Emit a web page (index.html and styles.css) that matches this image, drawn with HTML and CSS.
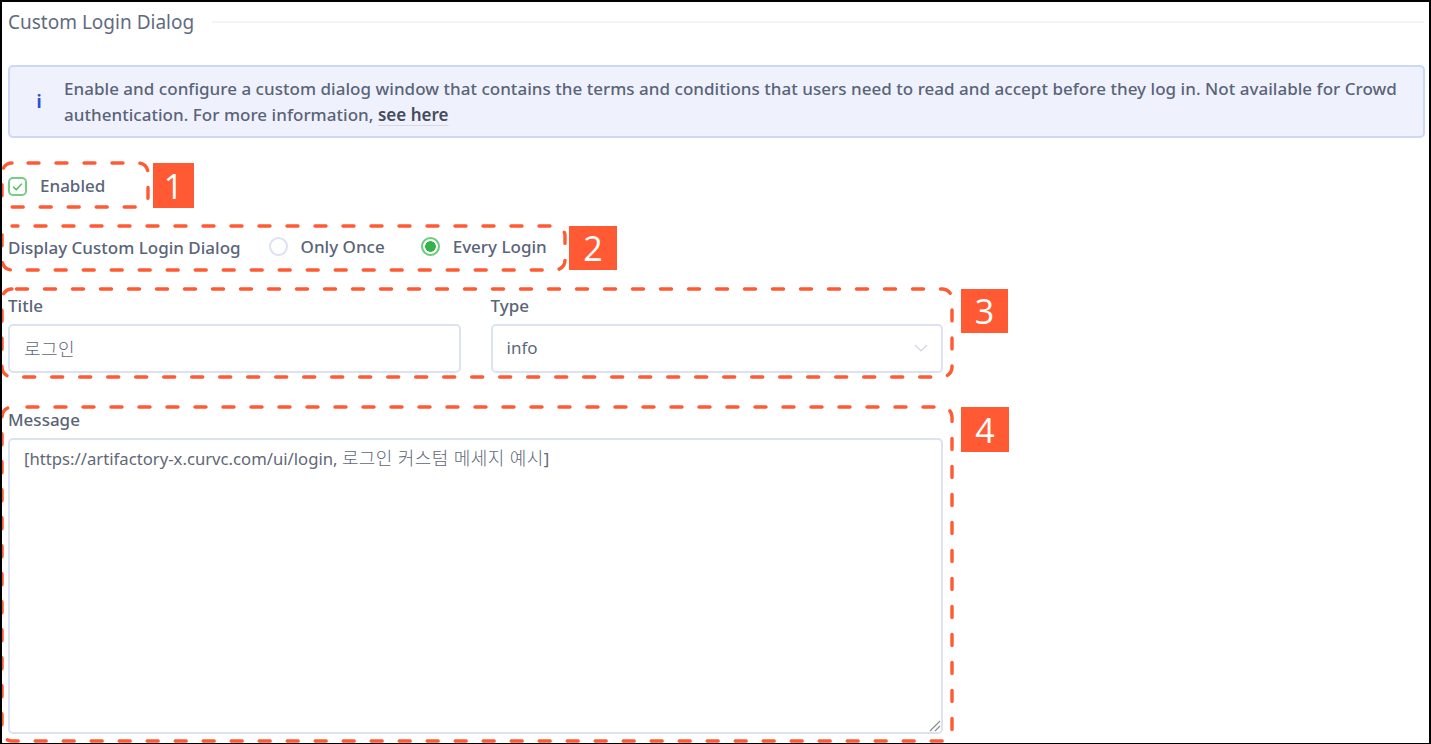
FILE: index.html
```html
<!DOCTYPE html>
<html lang="en">
<head>
<meta charset="utf-8">
<title>Custom Login Dialog</title>
<link rel="stylesheet" href="styles.css">
</head>
<body>
<main class="frame">
  <div class="section-head">
    <h2 class="section-title">Custom Login Dialog</h2>
    <div class="section-rule"></div>
  </div>
  <div class="alert">
    <span class="alert-icon">i</span>
    <p class="alert-text">Enable and configure a custom dialog window that contains the terms and conditions that users need to read and accept before they log in. Not available for Crowd authentication. For more information, <a class="alert-link">see here</a></p>
  </div>
  <div class="check-row">
    <span class="checkbox">
      <svg viewBox="0 0 12 12" width="13" height="13"><path d="M2 6.2 4.9 9 10 3.3" fill="none" stroke="#3fb950" stroke-width="1.2"/></svg>
    </span>
    <span class="option-label">Enabled</span>
  </div>
  <div class="radio-row">
    <span class="field-label radio-title">Display Custom Login Dialog</span>
    <span class="radio"></span>
    <span class="option-label once">Only Once</span>
    <span class="radio radio-on"></span>
    <span class="option-label">Every Login</span>
  </div>
  <div class="field-row">
    <div class="field">
      <label class="field-label">Title</label>
      <div class="input"><span class="ko">로그인</span></div>
    </div>
    <div class="field">
      <label class="field-label">Type</label>
      <div class="input select">
        <span>info</span>
        <svg viewBox="0 0 14 8" width="14" height="8"><path d="M1 1 7 7 13 1" fill="none" stroke="#d0d5e4" stroke-width="1.2"/></svg>
      </div>
    </div>
  </div>
  <div class="field message">
    <label class="field-label">Message</label>
    <div class="input textarea">
      <span>[https://artifactory-x.curvc.com/ui/login, <span class="ko">로그인 커스텀 메세지 예시</span>]</span>
      <svg class="grip" viewBox="0 0 12 12" width="12" height="12"><path d="M1 11 11 1M6 11 11 6" fill="none" stroke="#8a8a8a" stroke-width="1.1"/></svg>
    </div>
  </div>

  <svg class="marks" width="1431" height="744" viewBox="0 0 1431 744">
    <rect class="mark-1" x="2" y="163" width="146" height="44" rx="10"/>
    <rect class="mark-2" x="2" y="226" width="563" height="44" rx="10"/>
    <rect class="mark-3" x="2" y="289" width="950" height="88" rx="10"/>
    <rect class="mark-4" x="2" y="407" width="950" height="334" rx="10"/>
  </svg>
  <span class="badge badge-1">1</span>
  <span class="badge badge-2">2</span>
  <span class="badge badge-3">3</span>
  <span class="badge badge-4">4</span>
</main>
</body>
</html>
```
FILE: styles.css
```css
* { box-sizing: border-box; }
html, body { margin: 0; padding: 0; background: #fff; }
body { font-family: "Noto Sans", "Noto Sans CJK KR", sans-serif; overflow: hidden; }

.frame {
  position: relative;
  width: 1431px;
  height: 744px;
  border: 2px solid #000;
  border-bottom-width: 1px;
  padding: 0 4px 0 6px;
  color: #5a6478;
  overflow: hidden;
}

.section-head { display: flex; align-items: center; gap: 18px; height: 40px; }
.section-title { margin: 0; font-size: 19px; font-weight: 400; line-height: 40px; color: #5f6b80; white-space: nowrap; }
.section-rule { flex: 1; height: 2px; background: #f3f4fa; margin-right: 1px; }

.alert {
  display: flex;
  align-items: center;
  margin-top: 23px;
  height: 73px;
  background: #eff2fd;
  border: 2px solid #cdd8f7;
  border-radius: 5px;
}
.alert-icon { width: 54px; padding-left: 4px; text-align: center; color: #2a4fd6; font-weight: 700; font-size: 17px; flex: none; }
.alert-text { margin: 0; font-size: 17px; font-weight: 500; line-height: 26px; letter-spacing: 0.03px; color: #5a6478; }
.alert-link { color: #444c5c; font-weight: 600; text-decoration: underline 1px #d6d9e2; text-underline-offset: 4px; }

.check-row { display: flex; align-items: center; margin-top: 35px; height: 26px; }
.checkbox {
  display: flex; align-items: center; justify-content: center;
  width: 19px; height: 19px;
  border: 2px solid #74cf84; border-radius: 5px;
}
.option-label { font-size: 17px; font-weight: 500; color: #5a6478; white-space: nowrap; }
.check-row .option-label { margin-left: 13px; margin-bottom: 2px; }

.radio-row { display: flex; align-items: center; margin-top: 34px; height: 26px; }
.field-label { display: block; font-size: 17px; font-weight: 500; color: #5a6478; line-height: 24px; }
.radio-title { margin-top: 4px; }
.radio {
  width: 19px; height: 19px; margin-left: 28px; margin-right: 13px;
  border: 2px solid #dde2f0; border-radius: 50%; background: #fff; flex: none;
}
.radio-on { margin-left: 36px; border-color: #6dcb7d; background: radial-gradient(circle, #36b24a 0 5px, #fff 5.6px); }

.field-row { display: flex; gap: 30px; margin-top: 35px; width: 935px; }
.field { flex: 1; }
.field-label + .input { margin-top: 6px; }
.input {
  height: 49px;
  padding: 0 14px 2px;
  display: flex; align-items: center;
  border: 2px solid #dde2f0;
  border-radius: 5px;
  font-size: 17px;
  color: #5f6878;
  background: #fff;
}
.ko { font-size: 18px; letter-spacing: 0.4px; font-weight: 300; }
.select { justify-content: space-between; padding-right: 13px; }

.message { width: 935px; margin-top: 35px; position: relative; }
.textarea {
  position: relative;
  height: 296px;
  margin-top: 6px;
  align-items: flex-start;
  padding-top: 6px;
  padding-bottom: 0;
  line-height: 24px;
  font-size: 16.7px;
}
.grip { position: absolute; right: 0; bottom: 0; }

.marks { position: absolute; left: -2px; top: -2px; pointer-events: none; }
.marks rect { fill: none; stroke: #ff5a33; stroke-width: 3.4; stroke-linecap: round; stroke-dasharray: 11 17; }
.marks .mark-1 { stroke-dashoffset: -16px; }
.marks .mark-2 { stroke-dashoffset: -23px; }
.marks .mark-3 { stroke-dashoffset: -4.5px; }
.marks .mark-4 { stroke-dashoffset: -15px; }

.badge {
  position: absolute;
  display: flex; align-items: center; justify-content: center;
  background: #ff5a33; color: #fff;
  font-family: "Open Sans", sans-serif;
  font-size: 34px; line-height: 1;
}
.badge-1 { left: 151px; top: 161px; width: 41px; height: 45px; }
.badge-2 { left: 567px; top: 224px; width: 48px; height: 44px; }
.badge-3 { left: 959px; top: 287px; width: 47px; height: 44px; }
.badge-4 { left: 959px; top: 405px; width: 48px; height: 45px; }
```
